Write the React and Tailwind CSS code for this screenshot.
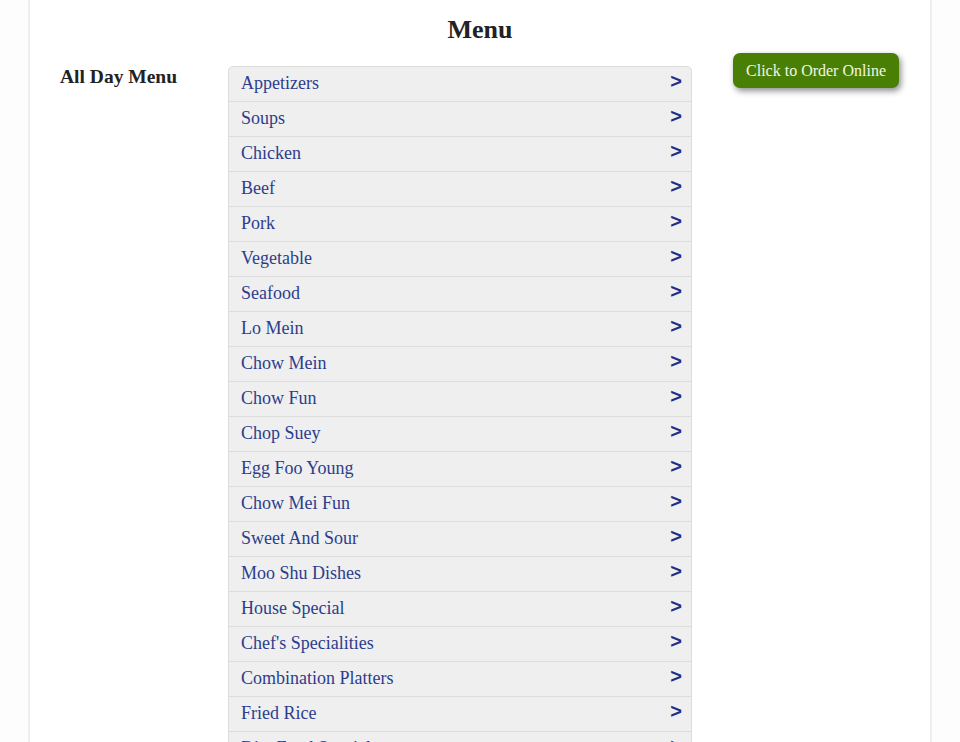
import React from "react";

const categories = [
  "Appetizers",
  "Soups",
  "Chicken",
  "Beef",
  "Pork",
  "Vegetable",
  "Seafood",
  "Lo Mein",
  "Chow Mein",
  "Chow Fun",
  "Chop Suey",
  "Egg Foo Young",
  "Chow Mei Fun",
  "Sweet And Sour",
  "Moo Shu Dishes",
  "House Special",
  "Chef's Specialities",
  "Combination Platters",
  "Fried Rice",
  "Diet Food Specials",
  "Side Orders",
  "Beverages",
];

const App = () => {
  return (
    <div className="min-h-screen bg-[#fdfdfd] font-['Liberation_Serif',serif]">
      <div className="ml-[28px] w-[904px] min-h-screen bg-white border-x-2 border-[#efefef]">
        {/* Title */}
        <h1 className="pt-[15px] text-center text-[26px] leading-[30px] font-bold text-[#222]">
          Menu
        </h1>

        <div className="flex mt-[8px] pl-[30px] pr-[31px]">
          {/* Menu name */}
          <div className="w-[168px] shrink-0 pt-[12px]">
            <h2 className="text-[19.5px] leading-[24px] font-bold text-[#222]">All Day Menu</h2>
          </div>

          {/* Category list */}
          <ul className="mt-[13px] w-[464px] shrink-0 border border-[#dcdcdc] rounded-t-[5px] bg-[#efefef]">
            {categories.map((name) => (
              <li
                key={name}
                className="flex items-center justify-between h-[35px] pl-[12px] pr-[9px] border-b border-[#dcdcdc] last:border-b-0 cursor-pointer"
              >
                <span className="-mt-[2px] text-[18px] leading-[22px] text-[#2c3d8d]">{name}</span>
                <span className="-mt-[7px] font-['Liberation_Sans',sans-serif] text-[20px] leading-[22px] font-bold text-[#1f2f86]">
                  &gt;
                </span>
              </li>
            ))}
          </ul>

          {/* Order button */}
          <div className="flex-1 flex justify-end">
            <button className="h-[35px] w-[166px] rounded-[7px] bg-[#4a7f06] text-[16px] text-[#f0f8e2] shadow-[2px_3px_6px_rgba(0,0,0,0.45)]">
              Click to Order Online
            </button>
          </div>
        </div>
      </div>
    </div>
  );
};

export default App;
